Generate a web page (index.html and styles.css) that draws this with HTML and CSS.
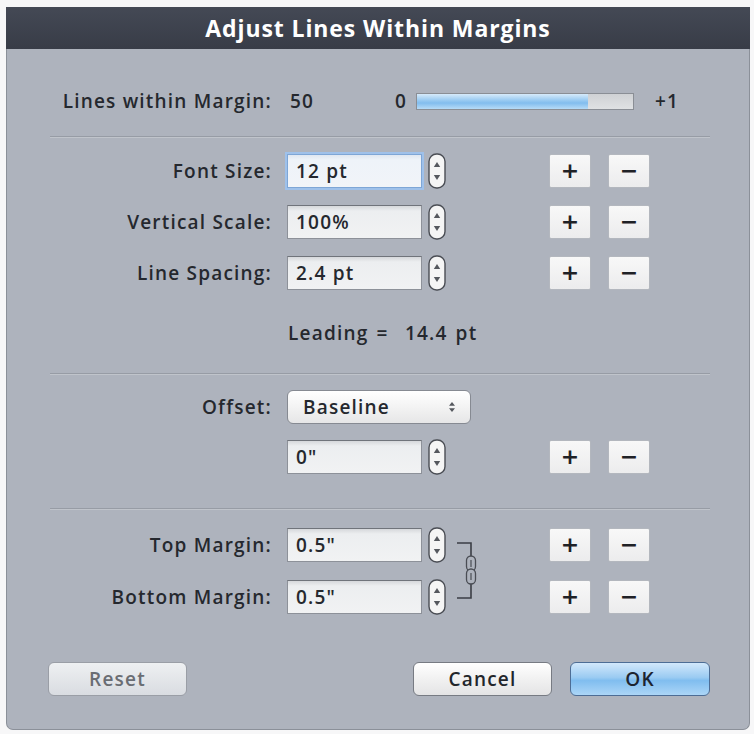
FILE: index.html
```html
<!DOCTYPE html>
<html lang="en">
<head>
    <meta charset="UTF-8">
    <title>Adjust Lines Within Margins</title>
    <link rel="stylesheet" href="styles.css">
</head>
<body>

    <svg class="sprite" xmlns="http://www.w3.org/2000/svg">
        <symbol id="stepper" viewBox="0 0 18 36">
            <rect x="1" y="1" width="16" height="34" rx="7.5" fill="#f5f5f5" stroke="#4a4d54" stroke-width="1.4"/>
            <path d="M9 9 L12.2 14 H5.8 Z" fill="#55585e"/>
            <path d="M9 27 L12.2 22 H5.8 Z" fill="#55585e"/>
        </symbol>
    </svg>

    <div class="dialog">
        <div class="titlebar">Adjust Lines Within Margins</div>

        <div class="content">
            <!-- Resumo -->
            <div class="summary">
                <span class="label">Lines within Margin:</span>
                <span class="summary-value">50</span>
                <span class="range-min">0</span>
                <div class="meter"><div class="meter-fill" style="width: 79%"></div></div>
                <span class="range-max">+1</span>
            </div>

            <div class="sep"></div>

            <!-- Tipo -->
            <div class="rows">
                <div class="row">
                    <span class="label">Font Size:</span>
                    <div class="field focused">12 pt</div>
                    <svg class="stepper"><use href="#stepper"/></svg>
                    <div class="pm"><button class="pm-btn">+</button><button class="pm-btn">−</button></div>
                </div>
                <div class="row">
                    <span class="label">Vertical Scale:</span>
                    <div class="field">100%</div>
                    <svg class="stepper"><use href="#stepper"/></svg>
                    <div class="pm"><button class="pm-btn">+</button><button class="pm-btn">−</button></div>
                </div>
                <div class="row">
                    <span class="label">Line Spacing:</span>
                    <div class="field">2.4 pt</div>
                    <svg class="stepper"><use href="#stepper"/></svg>
                    <div class="pm"><button class="pm-btn">+</button><button class="pm-btn">−</button></div>
                </div>
            </div>

            <div class="leading">Leading =&nbsp; 14.4 pt</div>

            <div class="sep sep-2"></div>

            <!-- Deslocamento -->
            <div class="rows offset-rows">
                <div class="row">
                    <span class="label">Offset:</span>
                    <div class="popup">
                        <span>Baseline</span>
                        <svg class="popup-arrows" width="8" height="12" viewBox="0 0 8 12">
                            <path d="M4 1 L7 4.8 H1 Z" fill="#55585e"/>
                            <path d="M4 11 L7 7.2 H1 Z" fill="#55585e"/>
                        </svg>
                    </div>
                </div>
                <div class="row">
                    <span class="label"></span>
                    <div class="field">0"</div>
                    <svg class="stepper"><use href="#stepper"/></svg>
                    <div class="pm"><button class="pm-btn">+</button><button class="pm-btn">−</button></div>
                </div>
            </div>

            <div class="sep sep-3"></div>

            <!-- Margens -->
            <div class="margins">
                <div class="margin-fields">
                    <div class="row">
                        <span class="label">Top Margin:</span>
                        <div class="field">0.5"</div>
                        <svg class="stepper"><use href="#stepper"/></svg>
                    </div>
                    <div class="row">
                        <span class="label">Bottom Margin:</span>
                        <div class="field">0.5"</div>
                        <svg class="stepper"><use href="#stepper"/></svg>
                    </div>
                </div>
                <div class="link">
                    <svg width="22" height="60" viewBox="0 0 22 60">
                        <path d="M1 2 H15 V57 H1" fill="none" stroke="#3b3e45" stroke-width="1.6"/>
                        <rect x="10.5" y="15" width="9" height="15" rx="4.5" fill="#aeb3bd" stroke="#4a4d54" stroke-width="1.3"/>
                        <rect x="10.5" y="28" width="9" height="15" rx="4.5" fill="#aeb3bd" stroke="#4a4d54" stroke-width="1.3"/>
                        <path d="M15 19 V26 M15 32 V39" stroke="#4a4d54" stroke-width="1.2"/>
                    </svg>
                </div>
                <div class="margin-pm">
                    <div class="pm"><button class="pm-btn">+</button><button class="pm-btn">−</button></div>
                    <div class="pm"><button class="pm-btn">+</button><button class="pm-btn">−</button></div>
                </div>
            </div>

            <!-- Botões -->
            <div class="actions">
                <button class="btn btn-reset">Reset</button>
                <div class="actions-right">
                    <button class="btn btn-cancel">Cancel</button>
                    <button class="btn btn-ok">OK</button>
                </div>
            </div>
        </div>
    </div>

</body>
</html>
```

FILE: styles.css
```css
/* Global */
body {
    margin: 0;
    background-color: #f7f7f8;
    font-family: 'Open Sans', 'Liberation Sans', sans-serif;
    color: #25282e;
}

.sprite {
    display: none;
}

/* Janela */
.dialog {
    margin: 7px 0 0 6px;
    width: 744px;
    box-sizing: border-box;
    background-color: #aeb3bd;
    border: 1px solid #8b9099;
    border-top: none;
    border-radius: 0 0 7px 7px;
}

.titlebar {
    height: 42px;
    margin: 0 -1px;
    background: linear-gradient(#444955, #383c47);
    color: #fff;
    font-size: 23px;
    font-weight: 700;
    line-height: 42px;
    text-align: center;
    letter-spacing: 0.9px;
}

.content {
    padding: 35px 0 33px 0;
    font-size: 19px;
    font-weight: 600;
    letter-spacing: 1.2px;
}

.label {
    width: 265px;
    flex-shrink: 0;
    text-align: right;
}

/* Resumo */
.summary {
    display: flex;
    align-items: center;
    height: 34px;
}

.summary-value {
    width: 105px;
    margin-left: 18px;
}

.range-min {
    width: 21px;
}

.meter {
    width: 218px;
    height: 17px;
    box-sizing: border-box;
    border: 1px solid #8a8e95;
    background: linear-gradient(#cfd1d4, #dfe1e3);
}

.meter-fill {
    height: 100%;
    background: linear-gradient(#d6eafa, #95c8f1 45%, #82bdee 60%, #b6dbf7);
}

.range-max {
    margin-left: 21px;
}

/* Separadores */
.sep {
    height: 1px;
    margin: 18px 39px 16px 43px;
    background-color: #979ca5;
    border-bottom: 1px solid #c0c4cb;
}

.sep-2 {
    margin-top: 30px;
    margin-bottom: 15px;
}

.sep-3 {
    margin-top: 34px;
    margin-bottom: 18px;
}

/* Linhas */
.rows {
    display: flex;
    flex-direction: column;
    gap: 17px;
}

.offset-rows {
    gap: 16px;
}

.row {
    display: flex;
    align-items: center;
    height: 34px;
}

.field {
    width: 135px;
    height: 34px;
    margin-left: 15px;
    box-sizing: border-box;
    padding-left: 8px;
    border: 1px solid #8d9199;
    border-top-color: #70747b;
    background: linear-gradient(#d6d8db, #eceef0 5px, #f1f2f3);
    line-height: 32px;
}

.field.focused {
    border-color: #7ea6d6;
    box-shadow: 0 0 0 2px #9fc1ea;
    background: linear-gradient(#dfe7f1, #eef3f9 5px, #f1f4f8);
}

.stepper {
    width: 18px;
    height: 36px;
    margin-left: 6px;
    flex-shrink: 0;
}

.pm {
    display: flex;
    gap: 17px;
    margin-left: 103px;
}

.pm-btn {
    width: 42px;
    height: 34px;
    padding: 0;
    border: 1px solid #b3b7be;
    border-radius: 2px;
    background: linear-gradient(#f8f8f8, #ececed);
    color: #1f2126;
    font-family: 'DejaVu Sans', sans-serif;
    font-size: 22px;
    font-weight: bold;
    line-height: 30px;
}

.leading {
    margin: 33px 0 0 281px;
    height: 20px;
    line-height: 20px;
    word-spacing: 2px;
}

/* Menu */
.popup {
    display: flex;
    align-items: center;
    justify-content: space-between;
    width: 184px;
    height: 34px;
    margin-left: 15px;
    box-sizing: border-box;
    padding: 0 14px 0 15px;
    border: 1px solid #868a92;
    border-radius: 6px;
    background: linear-gradient(#ffffff, #f3f3f3 50%, #e6e6e7);
}

/* Margens */
.margins {
    display: flex;
}

.margin-fields {
    display: flex;
    flex-direction: column;
    gap: 18px;
}

.link {
    display: flex;
    align-items: center;
    padding-left: 10px;
    width: 93px;
}

.margin-pm {
    display: flex;
    flex-direction: column;
    gap: 18px;
}

.margin-pm .pm {
    margin-left: 0;
}

/* Botões */
.actions {
    display: flex;
    justify-content: space-between;
    margin: 48px 39px 0 41px;
}

.actions-right {
    display: flex;
    gap: 18px;
}

.btn {
    width: 139px;
    height: 34px;
    border-radius: 6px;
    font-family: 'Open Sans', 'Liberation Sans', sans-serif;
    font-size: 19px;
    font-weight: 600;
    letter-spacing: 1.2px;
}

.btn-reset {
    border: 1px solid #9a9ea6;
    background: linear-gradient(#eef0f2, #d9dce1);
    color: #6a6d73;
}

.btn-cancel {
    border: 1px solid #777b83;
    background: linear-gradient(#ffffff, #f1f1f1 50%, #e4e4e5);
    color: #23262b;
}

.btn-ok {
    width: 140px;
    border: 1px solid #4d6d95;
    background: linear-gradient(#d2e8fb, #9bcbf2 45%, #80bdef 55%, #acd6f7);
    color: #1d2430;
}
```
